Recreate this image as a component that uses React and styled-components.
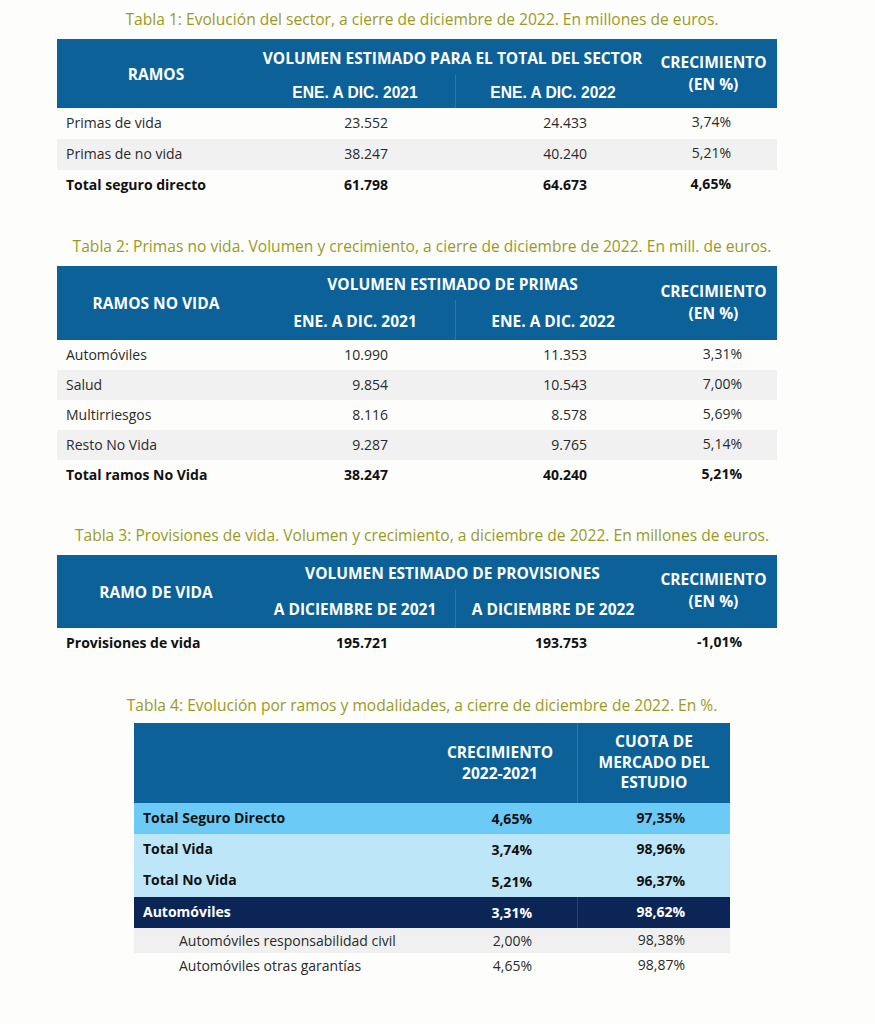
import React from 'react';
import styled, { createGlobalStyle } from 'styled-components';

const GlobalStyle = createGlobalStyle`
  body {
    margin: 0;
    background: #fdfdfc;
    font-family: 'Open Sans', 'Liberation Sans', sans-serif;
    color: #222;
  }
`;

const Page = styled.div`
  width: 844px;
  padding-top: 9px;
`;

const Section = styled.section`
  margin-top: ${(p) => p.$top || 0}px;
`;

const Caption = styled.p`
  margin: 0 0 ${(p) => p.$gap || 10}px;
  text-align: center;
  font-size: 15.6px;
  line-height: 20px;
  color: #9a9a1f;
`;

const Table = styled.div`
  margin-left: ${(p) => p.$left}px;
  width: ${(p) => p.$width}px;
`;

const Head = styled.div`
  display: grid;
  grid-template-columns: ${(p) => p.$cols};
  grid-template-rows: ${(p) => p.$rows};
  background: #0b6198;
  color: #fff;
  font-size: 15.5px;
  font-weight: 700;
`;

const HeadCell = styled.div`
  grid-column: ${(p) => p.$col};
  grid-row: ${(p) => p.$row};
  display: flex;
  align-items: center;
  justify-content: center;
  text-align: center;
  white-space: nowrap;
  line-height: ${(p) => p.$lh || 22}px;
  font-family: ${(p) => (p.$arial ? "'Liberation Sans', Arial, sans-serif" : 'inherit')};
  font-size: ${(p) => (p.$arial ? '15.6px' : 'inherit')};
  border-left: ${(p) => (p.$divider ? '1px solid rgba(255,255,255,0.14)' : 'none')};
  padding-top: ${(p) => p.$pt || 0}px;
  padding-bottom: ${(p) => p.$pb || 0}px;
`;

const Row = styled.div`
  display: grid;
  grid-template-columns: ${(p) => p.$cols};
  height: ${(p) => p.$h}px;
  align-items: center;
  font-size: 14px;
  font-weight: ${(p) => (p.$bold ? 700 : 400)};
  color: ${(p) => p.$color || (p.$bold ? '#111' : '#2a2a2a')};
  background: ${(p) => p.$bg || 'transparent'};
`;

const Cell = styled.div`
  padding: 0 ${(p) => p.$pr || 0}px ${(p) => p.$pb || 0}px ${(p) => p.$pl || 0}px;
  align-self: stretch;
  display: flex;
  align-items: center;
  justify-content: ${(p) => (p.$align === 'right' ? 'flex-end' : 'flex-start')};
  border-left: ${(p) => (p.$divider ? '1px solid rgba(255,255,255,0.12)' : 'none')};
  white-space: nowrap;
`;

const COLS = '198px 200px 195px 127px';

function SectorTable({ caption, first, group, sub, arial, headRows, rows, rowH, pctPad, headPad = 0 }) {
  return (
    <>
      <Caption>{caption}</Caption>
      <Table $left={57} $width={720}>
        <Head $cols={COLS} $rows={headRows}>
          <HeadCell $col="1" $row="1 / 3">{first}</HeadCell>
          <HeadCell $col="2 / 4" $row="1" $pt={headPad}>{group}</HeadCell>
          <HeadCell $col="2" $row="2" $arial={arial} $pt={headPad}>{sub[0]}</HeadCell>
          <HeadCell $col="3" $row="2" $arial={arial} $pt={headPad} $divider>{sub[1]}</HeadCell>
          <HeadCell $col="4" $row="1 / 3" $lh={22} $pt={headPad} $pb={4}>
            CRECIMIENTO
            <br />
            (EN %)
          </HeadCell>
        </Head>
        {rows.map((r, i) => (
          <Row key={r[0]} $cols={COLS} $h={rowH} $bold={r[4]} $bg={i % 2 === 1 && !r[4] ? '#f1f1f1' : undefined}>
            <Cell $pl={9} $pb={2}>{r[0]}</Cell>
            <Cell $align="right" $pr={67} $pb={2}>{r[1]}</Cell>
            <Cell $align="right" $pr={63} $pb={2}>{r[2]}</Cell>
            <Cell $align="right" $pr={pctPad} $pb={4}>{r[3]}</Cell>
          </Row>
        ))}
      </Table>
    </>
  );
}

const T4_COLS = '289px 154px 153px';

const t4Rows = [
  { name: 'Total Seguro Directo', a: '4,65%', b: '97,35%', bg: '#6ccbf6', bold: true, h: 31 },
  { name: 'Total Vida', a: '3,74%', b: '98,96%', bg: '#bde6f9', bold: true, h: 31 },
  { name: 'Total No Vida', a: '5,21%', b: '96,37%', bg: '#bde6f9', bold: true, h: 32 },
  { name: 'Automóviles', a: '3,31%', b: '98,62%', bg: '#0b2656', bold: true, h: 31, dark: true },
  { name: 'Automóviles responsabilidad civil', a: '2,00%', b: '98,38%', bg: '#f0f0f0', h: 25, sub: true },
  { name: 'Automóviles otras garantías', a: '4,65%', b: '98,87%', h: 25, sub: true },
];

export default function App() {
  return (
    <Page>
      <GlobalStyle />
      <Section>
        <SectorTable
          caption="Tabla 1: Evolución del sector, a cierre de diciembre de 2022. En millones de euros."
          first="RAMOS"
          group="VOLUMEN ESTIMADO PARA EL TOTAL DEL SECTOR"
          sub={['ENE. A DIC. 2021', 'ENE. A DIC. 2022']}
          arial
          headRows="35px 34px"
          headPad={3}
          rowH={31}
          pctPad={46}
          rows={[
            ['Primas de vida', '23.552', '24.433', '3,74%'],
            ['Primas de no vida', '38.247', '40.240', '5,21%'],
            ['Total seguro directo', '61.798', '64.673', '4,65%', true],
          ]}
        />
      </Section>
      <Section $top={35}>
        <SectorTable
          caption="Tabla 2: Primas no vida. Volumen y crecimiento, a cierre de diciembre de 2022. En mill. de euros."
          first="RAMOS NO VIDA"
          group="VOLUMEN ESTIMADO DE PRIMAS"
          sub={['ENE. A DIC. 2021', 'ENE. A DIC. 2022']}
          headRows="34px 40px"
          headPad={1}
          rowH={30}
          pctPad={35}
          rows={[
            ['Automóviles', '10.990', '11.353', '3,31%'],
            ['Salud', '9.854', '10.543', '7,00%'],
            ['Multirriesgos', '8.116', '8.578', '5,69%'],
            ['Resto No Vida', '9.287', '9.765', '5,14%'],
            ['Total ramos No Vida', '38.247', '40.240', '5,21%', true],
          ]}
        />
      </Section>
      <Section $top={35}>
        <SectorTable
          caption="Tabla 3: Provisiones de vida. Volumen y crecimiento, a diciembre de 2022. En millones de euros."
          first="RAMO DE VIDA"
          group="VOLUMEN ESTIMADO DE PROVISIONES"
          sub={['A DICIEMBRE DE 2021', 'A DICIEMBRE DE 2022']}
          headRows="35px 38px"
          rowH={30}
          pctPad={35}
          rows={[['Provisiones de vida', '195.721', '193.753', '-1,01%', true]]}
        />
      </Section>
      <Section $top={37}>
        <Caption $gap={8}>Tabla 4: Evolución por ramos y modalidades, a cierre de diciembre de 2022. En %.</Caption>
        <Table $left={134} $width={596}>
          <Head $cols={T4_COLS} $rows="80px">
            <HeadCell $col="1" $row="1" />
            <HeadCell $col="2" $row="1" $lh={21}>
              CRECIMIENTO
              <br />
              2022-2021
            </HeadCell>
            <HeadCell $col="3" $row="1" $lh={20.5} $divider $pb={2}>
              CUOTA DE
              <br />
              MERCADO DEL
              <br />
              ESTUDIO
            </HeadCell>
          </Head>
          {t4Rows.map((r) => (
            <Row
              key={r.name}
              $cols={T4_COLS}
              $h={r.h}
              $bg={r.bg}
              $bold={r.bold}
              $color={r.dark ? '#fff' : undefined}
            >
              <Cell $pl={r.sub ? 45 : 9} $pb={r.sub ? 0 : 3}>{r.name}</Cell>
              <Cell $align="right" $pr={45}>{r.a}</Cell>
              <Cell $align="right" $pr={45} $pb={r.sub ? 3 : 2} $divider={r.dark}>{r.b}</Cell>
            </Row>
          ))}
        </Table>
      </Section>
    </Page>
  );
}
